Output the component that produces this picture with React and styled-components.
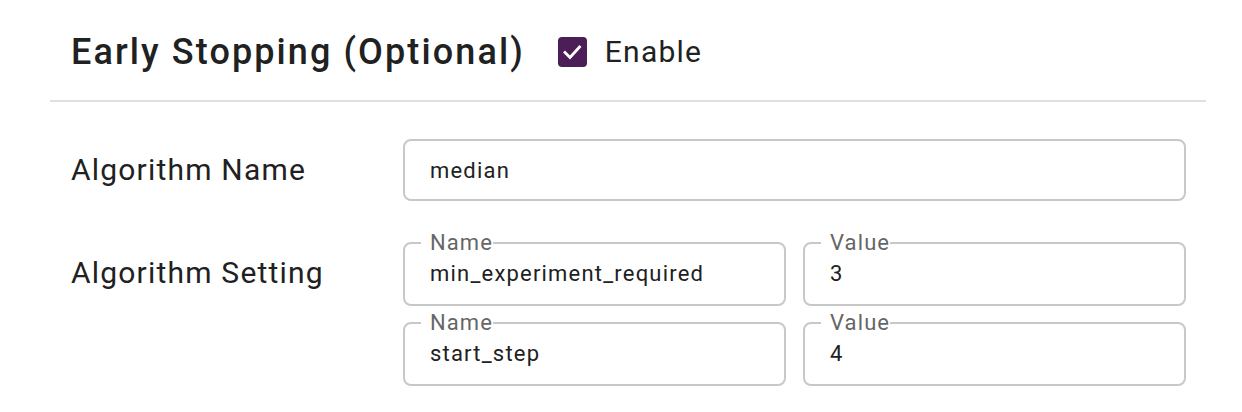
import React from "react";
import styled, { createGlobalStyle } from "styled-components";

const Global = createGlobalStyle`
  html, body { margin: 0; padding: 0; background: #ffffff; }
  body { font-family: Roboto, "Liberation Sans", sans-serif; color: #212121; }
  * { box-sizing: border-box; }
`;

const Panel = styled.div`
  margin-left: 50px;
  width: 1156px;
`;

const Header = styled.div`
  display: flex;
  align-items: center;
  height: 102px;
  padding: 4px 0 0 21px;
  border-bottom: 2px solid #e0e0e0;
`;

const Title = styled.h2`
  margin: 0;
  font-size: 36px;
  font-weight: 500;
  letter-spacing: 2.1px;
  line-height: 44px;
  color: #212121;
  white-space: nowrap;
`;

const CheckLabel = styled.label`
  display: flex;
  align-items: center;
  margin-left: 33px;
  gap: 18px;
  font-size: 30px;
  letter-spacing: 1.2px;
  line-height: 36px;
  color: #212121;
`;

const CheckBox = styled.span`
  display: inline-flex;
  align-items: center;
  justify-content: center;
  width: 29px;
  height: 30px;
  border-radius: 4px;
  background: #4c1e58;
`;

const Body = styled.div`
  padding: 37px 20px 0 20px;
  display: flex;
  flex-direction: column;
  gap: 29px;
`;

const Row = styled.div`
  display: grid;
  grid-template-columns: 333px 1fr;
  align-items: ${(p) => (p.$top ? "start" : "center")};
`;

const Label = styled.div`
  font-size: 30px;
  letter-spacing: 1.2px;
  line-height: 36px;
  padding-left: 1px;
  padding-top: ${(p) => p.$offset || 0}px;
  color: #212121;
  white-space: nowrap;
`;

const TextBox = styled.div`
  height: 62px;
  border: 2px solid #c8c8c8;
  border-radius: 8px;
  display: flex;
  align-items: center;
  padding-left: 25px;
  font-size: 22px;
  letter-spacing: 1.2px;
  color: #212121;
`;

const Grid = styled.div`
  display: grid;
  grid-template-columns: 1fr 1fr;
  column-gap: 17px;
  row-gap: 4px;
`;

const Field = styled.fieldset`
  margin: 0;
  border: 2px solid #c8c8c8;
  border-radius: 8px;
  padding: 0 16px 17px 16px;
  min-width: 0;
`;

const Legend = styled.legend`
  padding: 0 0 0 9px;
  font-size: 22px;
  letter-spacing: 1.1px;
  line-height: 26px;
  color: #666666;
`;

const FieldValue = styled.div`
  padding: 5px 0 0 9px;
  font-size: 22px;
  letter-spacing: 1.2px;
  line-height: 26px;
  color: #212121;
`;

const Check = () => (
  <svg width="22" height="22" viewBox="0 0 22 22">
    <polyline
      points="4,11.5 9,16.5 18.5,6"
      fill="none"
      stroke="#ffffff"
      strokeWidth="2.8"
      strokeLinecap="square"
    />
  </svg>
);

const settings = [
  { name: "min_experiment_required", value: "3" },
  { name: "start_step", value: "4" },
];

export default function App() {
  return (
    <>
      <Global />
      <Panel>
        <Header>
          <Title>Early Stopping (Optional)</Title>
          <CheckLabel>
            <CheckBox>
              <Check />
            </CheckBox>
            Enable
          </CheckLabel>
        </Header>
        <Body>
          <Row>
            <Label>Algorithm Name</Label>
            <TextBox>median</TextBox>
          </Row>
          <Row $top>
            <Label $offset={25}>Algorithm Setting</Label>
            <Grid>
              {settings.map((s) => (
                <React.Fragment key={s.name}>
                  <Field>
                    <Legend>Name</Legend>
                    <FieldValue>{s.name}</FieldValue>
                  </Field>
                  <Field>
                    <Legend>Value</Legend>
                    <FieldValue>{s.value}</FieldValue>
                  </Field>
                </React.Fragment>
              ))}
            </Grid>
          </Row>
        </Body>
      </Panel>
    </>
  );
}
